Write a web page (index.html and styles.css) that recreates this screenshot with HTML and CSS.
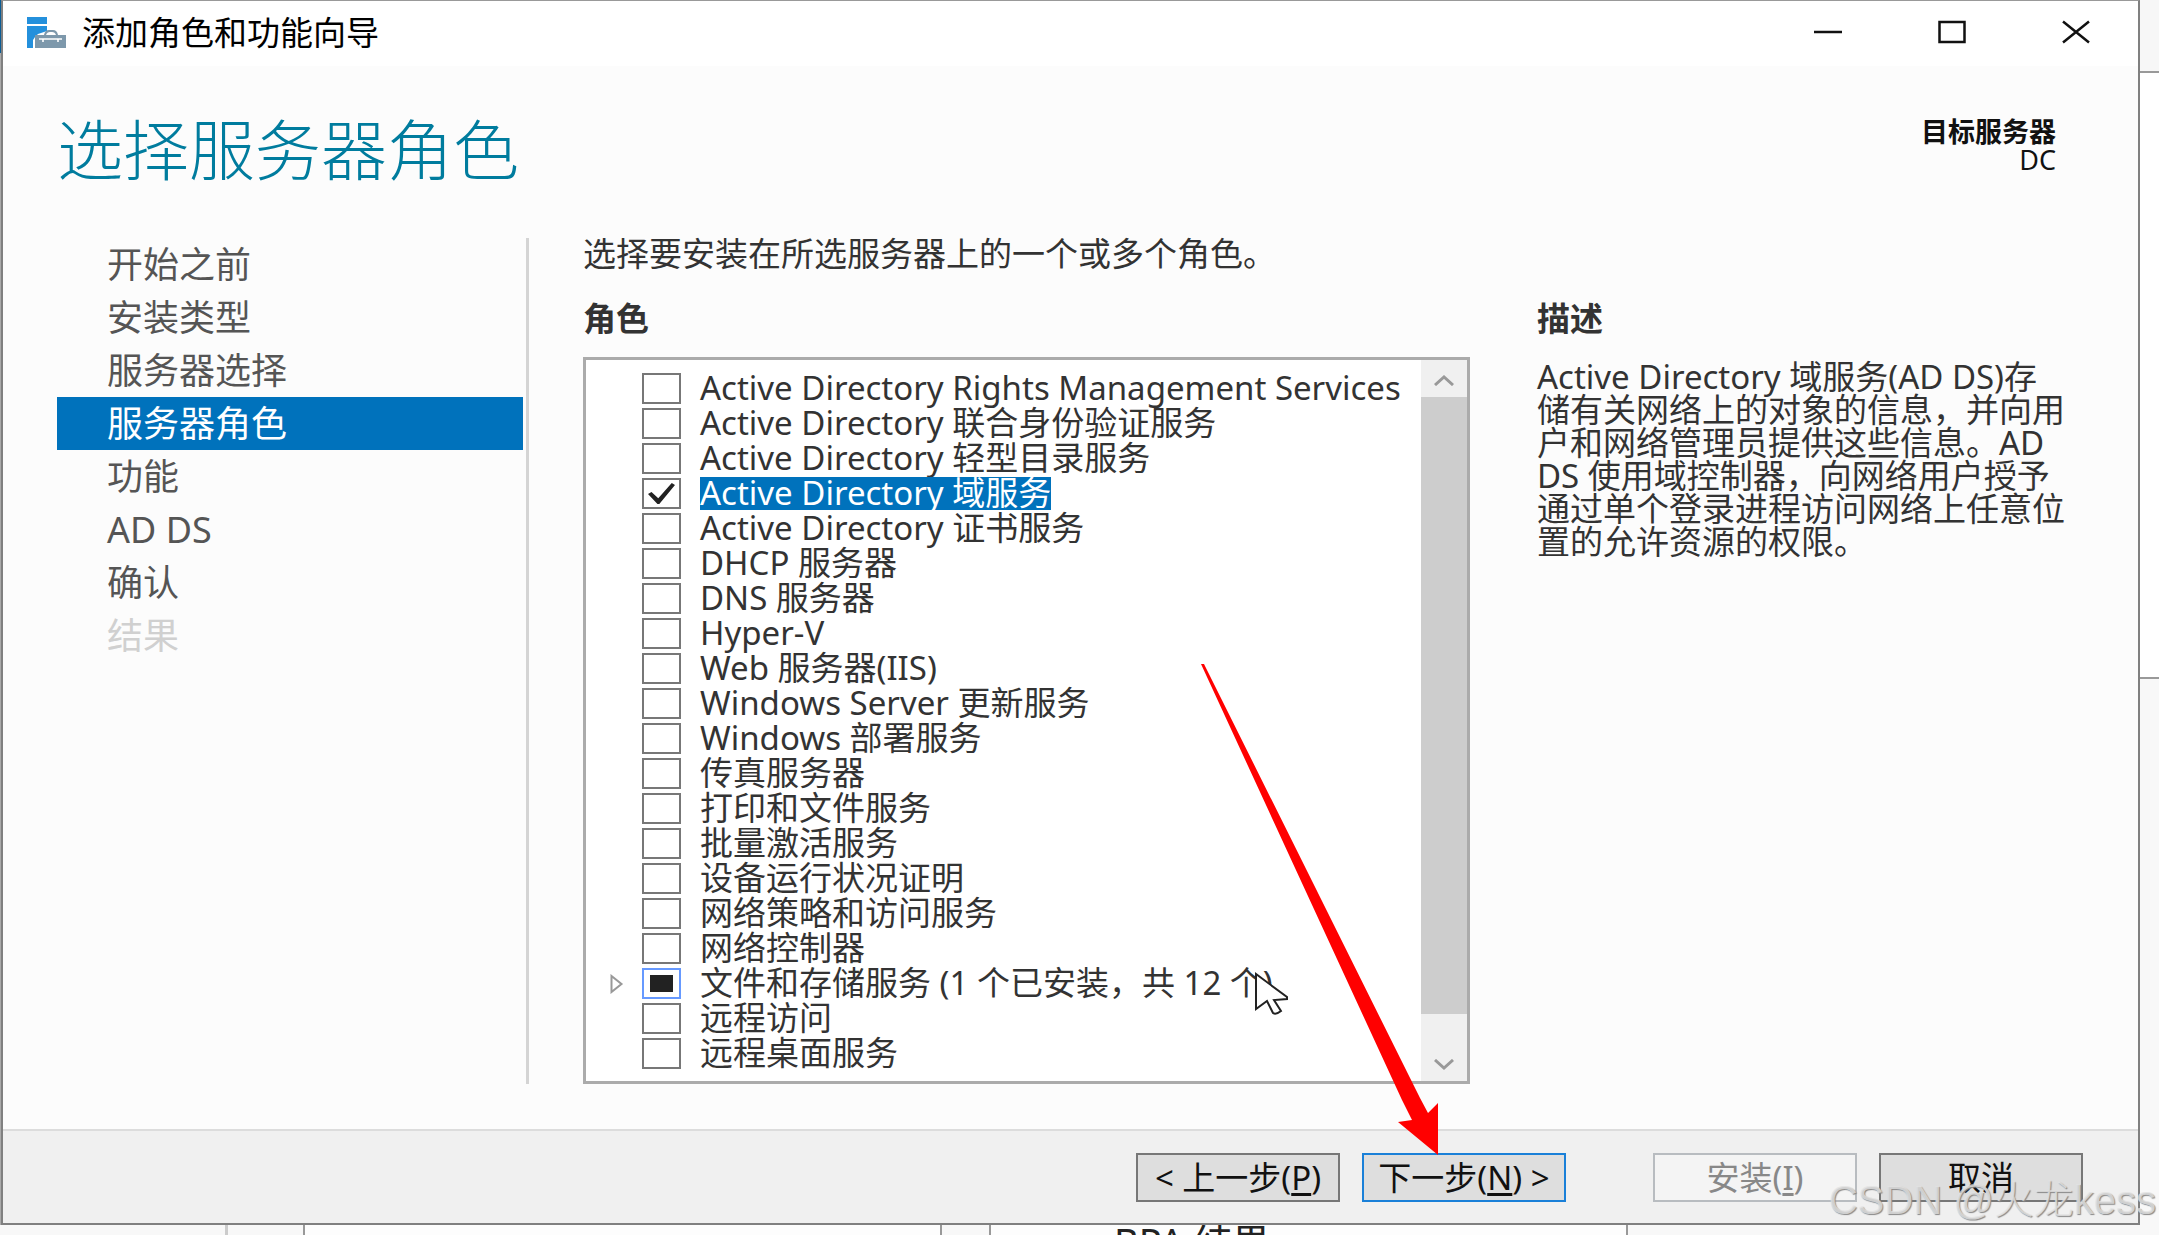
FILE: index.html
```html
<!DOCTYPE html>
<html lang="zh-CN">
<head>
<meta charset="utf-8">
<title>添加角色和功能向导</title>
<link rel="stylesheet" href="styles.css">
</head>
<body>
<div class="desktop">
  <div class="behind-left"></div>
  <main class="window">
    <div class="titlebar">
      <svg class="app-icon" viewBox="0 0 39 31" aria-hidden="true">
        <path fill="#2490dc" d="M0 0h20v7H0zM0 9h20v5l-9 3-3 3-2 3v8H0z"/>
        <path fill="#7d98ab" d="M8 18h9q1-5 5-5h4q4 0 5 5h8v13H8zM19 18h10q-1-3-4-3h-2q-3 0-4 3z" fill-rule="evenodd"/>
        <path fill="none" stroke="#fff" stroke-width="1.6" d="M12 22h23M16 22v3M31 22v3"/>
      </svg>
      <span class="title">添加角色和功能向导</span>
      <div class="caption-buttons">
        <button type="button" aria-label="最小化"><svg viewBox="0 0 28 24"><path d="M0 12h28"/></svg></button>
        <button type="button" aria-label="最大化"><svg viewBox="0 0 28 24"><path d="M1.500 2h25v20h-25z"/></svg></button>
        <button type="button" aria-label="关闭"><svg viewBox="0 0 28 24"><path d="M1 1.500l26 21M27 1.500l-26 21"/></svg></button>
      </div>
    </div>

    <header class="heading">
      <h1>选择服务器角色</h1>
      <div class="target"><strong>目标服务器</strong><span>DC</span></div>
    </header>

    <div class="content">
      <nav class="steps">
        <a href="#before">开始之前</a>
        <a href="#type">安装类型</a>
        <a href="#server">服务器选择</a>
        <a href="#roles" class="current" aria-current="step">服务器角色</a>
        <a href="#features">功能</a>
        <a href="#adds">AD DS</a>
        <a href="#confirm">确认</a>
        <a class="disabled" aria-disabled="true">结果</a>
      </nav>

      <section class="roles">
        <p class="intro">选择要安装在所选服务器上的一个或多个角色。</p>
        <h2>角色</h2>
        <div class="listbox">
          <ul class="role-list">
            <li><input type="checkbox" id="r1"><label for="r1">Active Directory Rights Management Services</label></li>
            <li><input type="checkbox" id="r2"><label for="r2">Active Directory 联合身份验证服务</label></li>
            <li><input type="checkbox" id="r3"><label for="r3">Active Directory 轻型目录服务</label></li>
            <li class="selected"><input type="checkbox" id="r4" checked><label for="r4">Active Directory 域服务</label></li>
            <li><input type="checkbox" id="r5"><label for="r5">Active Directory 证书服务</label></li>
            <li><input type="checkbox" id="r6"><label for="r6">DHCP 服务器</label></li>
            <li><input type="checkbox" id="r7"><label for="r7">DNS 服务器</label></li>
            <li><input type="checkbox" id="r8"><label for="r8">Hyper-V</label></li>
            <li><input type="checkbox" id="r9"><label for="r9">Web 服务器(IIS)</label></li>
            <li><input type="checkbox" id="r10"><label for="r10">Windows Server 更新服务</label></li>
            <li><input type="checkbox" id="r11"><label for="r11">Windows 部署服务</label></li>
            <li><input type="checkbox" id="r12"><label for="r12">传真服务器</label></li>
            <li><input type="checkbox" id="r13"><label for="r13">打印和文件服务</label></li>
            <li><input type="checkbox" id="r14"><label for="r14">批量激活服务</label></li>
            <li><input type="checkbox" id="r15"><label for="r15">设备运行状况证明</label></li>
            <li><input type="checkbox" id="r16"><label for="r16">网络策略和访问服务</label></li>
            <li><input type="checkbox" id="r17"><label for="r17">网络控制器</label></li>
            <li class="expandable"><svg class="expander" viewBox="0 0 14 20" aria-hidden="true"><path d="M1.500 2v16l10-8z"/></svg><input type="checkbox" id="r18" class="partial" aria-checked="mixed"><label for="r18">文件和存储服务 (1 个已安装，共 12 个)</label></li>
            <li><input type="checkbox" id="r19"><label for="r19">远程访问</label></li>
            <li><input type="checkbox" id="r20"><label for="r20">远程桌面服务</label></li>
          </ul>
          <div class="scrollbar">
            <button type="button" aria-label="向上滚动"><svg viewBox="0 0 20 11"><path d="M1 10l9-8 9 8"/></svg></button>
            <div class="thumb"></div>
            <button type="button" aria-label="向下滚动"><svg viewBox="0 0 20 11"><path d="M1 1l9 8 9-8"/></svg></button>
          </div>
        </div>
      </section>

      <section class="description">
        <h2>描述</h2>
        <p>Active Directory 域服务(AD DS)存<br>储有关网络上的对象的信息，并向用<br>户和网络管理员提供这些信息。AD<br>DS 使用域控制器，向网络用户授予<br>通过单个登录进程访问网络上任意位<br>置的允许资源的权限。</p>
      </section>
    </div>

    <footer class="actions">
      <button type="button">&lt; 上一步(<u>P</u>)</button>
      <button type="button" class="default">下一步(<u>N</u>) &gt;</button>
      <button type="button" class="install" disabled>安装(<u>I</u>)</button>
      <button type="button">取消</button>
    </footer>
  </main>
  <div class="behind-right"></div>
  <div class="behind-bottom">
    <div class="rail"></div><div class="gutter"></div><div class="tile"></div><div class="gap"></div><div class="tile">BPA 结果</div>
  </div>

  <svg class="cursor" viewBox="0 0 34 44" aria-hidden="true"><path d="M2 2v35l11-8 6 12q3 2 8-2l-7-11 13-1v-2z"/></svg>
  <svg class="arrow" viewBox="0 0 240 492" aria-hidden="true"><path d="M1 1l3 0L220 435l8 15 10-10v52L198 459l14-2-10-20z"/></svg>
  <div class="watermark">CSDN @火龙kess</div>
</div>
</body>
</html>
```
FILE: styles.css
```css
* {
  box-sizing: border-box;
}

body {
  margin: 0;
  font-family: "Noto Sans", "Noto Sans CJK SC", sans-serif;
  font-size: 33px;
  line-height: 33px;
  color: #333;
  background: #f8f8f8;
}

h1, h2, p, ul {
  margin: 0;
  padding: 0;
  font-weight: 400;
}

button {
  font: inherit;
  color: inherit;
  padding: 0;
}

.desktop {
  position: relative;
  display: grid;
  grid-template-columns: 1px minmax(0, 1fr) 19px;
  grid-template-rows: 1fr 11px;
  min-height: 100vh;
  overflow: hidden;
}

.behind-left {
  background: linear-gradient(#0b5c94 53px, #aaa 53px);
}

.behind-right {
  background: linear-gradient(#f7f7f7 71px, #999 71px 73px, #fff 73px 677px, #999 677px 679px, #f8f8f8 679px);
}

.behind-bottom {
  grid-column: 1 / -1;
  display: flex;
  height: 11px;
  overflow: hidden;
  color: #222;
}

.rail {
  width: 228px;
  border-right: 3px solid #ccc;
}

.gutter {
  width: 75px;
}

.gap {
  width: 47px;
}

.tile {
  width: 639px;
  padding-left: 123px;
  border: solid #999;
  border-width: 0 2px;
  background: #fdfdfd;
  font-size: 38px;
  line-height: 32px;
}

.window {
  display: flex;
  flex-direction: column;
  border: 2px solid #808080;
  border-top: 1px solid #999;
  background: #fcfcfc;
}

.titlebar {
  display: flex;
  align-items: center;
  gap: 16px;
  height: 65px;
  padding: 0 0 3px 24px;
  background: #fff;
  color: #000;
}

.app-icon {
  width: 39px;
  height: 31px;
}

.title {
  flex: 1;
}

.caption-buttons {
  display: flex;
}

.caption-buttons button {
  width: 124px;
  height: 62px;
  border: 0;
  background: none;
}

.caption-buttons svg {
  display: block;
  width: 28px;
  height: 24px;
  margin: 0 auto;
}

.caption-buttons path {
  fill: none;
  stroke: #111;
  stroke-width: 2.5;
}

.heading {
  display: flex;
  justify-content: space-between;
  padding: 52px 82px 58px 54px;
}

h1 {
  font-size: 66px;
  line-height: 62px;
  font-weight: 300;
  color: #007c9e;
}

.target {
  display: flex;
  flex-direction: column;
  align-items: flex-end;
  font-size: 27px;
  line-height: 28px;
  color: #111;
}

.content {
  flex: 1;
  display: grid;
  grid-template-columns: 472px minmax(0, 941fr) minmax(0, 612fr);
  padding: 0 56px 45px 54px;
}

.steps {
  padding-right: 3px;
  border-right: 3px solid #d4d4d4;
}

.steps a {
  display: block;
  padding-left: 50px;
  font-size: 36px;
  line-height: 53px;
  color: #555;
  text-decoration: none;
}

.steps .current {
  background: #0072bc;
  color: #fff;
}

.steps .disabled {
  color: #d0d0d0;
}

.roles {
  display: flex;
  flex-direction: column;
  margin-left: 54px;
}

h2 {
  font-size: 33px;
  line-height: 32px;
  font-weight: 700;
}

.intro {
  line-height: 32px;
  margin-bottom: 33px;
}

.listbox {
  flex: 1;
  display: flex;
  margin-top: 22px;
  border: 3px solid #ababab;
  background: #fff;
}

.role-list {
  flex: 1;
  min-width: 0;
  padding: 11px 0 10px 24px;
  list-style: none;
  white-space: nowrap;
}

.role-list li {
  display: flex;
  align-items: center;
  height: 35px;
  padding-left: 32px;
}

.role-list .expandable {
  padding-left: 0;
}

.expander {
  width: 14px;
  height: 20px;
  margin-right: 18px;
}

.expander path {
  fill: #fff;
  stroke: #999;
  stroke-width: 2;
}

.role-list input {
  appearance: none;
  flex: none;
  display: grid;
  place-items: center;
  width: 39px;
  height: 31px;
  margin: 0 19px 0 0;
  border: 2px solid #777;
  background: #fff;
}

.role-list input:checked::before {
  content: "";
  width: 27px;
  height: 21px;
  background: #222;
  clip-path: polygon(0 52%, 13% 43%, 38% 73%, 88% 0, 100% 10%, 42% 100%, 35% 100%);
}

.role-list .partial {
  border-color: #69f;
}

.role-list .partial::before {
  content: "";
  width: 23px;
  height: 17px;
  background: #222;
}

.role-list label {
  padding-bottom: 2px;
  line-height: 31px;
}

.selected label {
  background: #0072bc;
  color: #fff;
}

.scrollbar {
  flex: none;
  display: grid;
  grid-template-rows: 37px 1fr 67px;
  width: 46px;
  background: #f0f0f0;
}

.scrollbar button {
  display: flex;
  justify-content: center;
  align-items: flex-end;
  padding-bottom: 11px;
  border: 0;
  background: #f0f0f0;
}

.scrollbar svg {
  width: 20px;
  height: 11px;
}

.scrollbar path {
  fill: none;
  stroke: #999;
  stroke-width: 3;
}

.thumb {
  background: #cdcdcd;
}

.description {
  margin-left: 67px;
  padding-top: 65px;
  white-space: nowrap;
}

.description p {
  margin-top: 25px;
}

.actions {
  display: flex;
  justify-content: flex-end;
  gap: 22px;
  padding: 22px 55px 21px;
  border-top: 2px solid #dcdcdc;
  background: #f0f0f0;
}

.actions button {
  width: 204px;
  height: 49px;
  border: 2px solid #777;
  background: #dedede;
  color: #111;
  line-height: 33px;
  white-space: nowrap;
}

.actions .default {
  border-color: #1a80d8;
}

.actions .install {
  margin-left: 65px;
  border-color: #b8bcc0;
  background: #f4f4f4;
  color: #888;
}

u {
  text-underline-offset: 3px;
}

.cursor {
  position: absolute;
  left: 1254px;
  top: 972px;
  width: 34px;
  height: 44px;
}

.cursor path {
  fill: #fff;
  stroke: #222;
  stroke-width: 2;
}

.arrow {
  position: absolute;
  left: 1200px;
  top: 663px;
  width: 240px;
  height: 492px;
}

.arrow path {
  fill: #f00;
}

.watermark {
  position: absolute;
  right: 3px;
  bottom: 11px;
  font-family: "Liberation Sans", "Noto Sans CJK SC", sans-serif;
  font-size: 40px;
  font-weight: 300;
  line-height: 50px;
  color: rgb(228 228 228 / 80%);
  text-shadow: 1px 1px 1px #888;
}
```
